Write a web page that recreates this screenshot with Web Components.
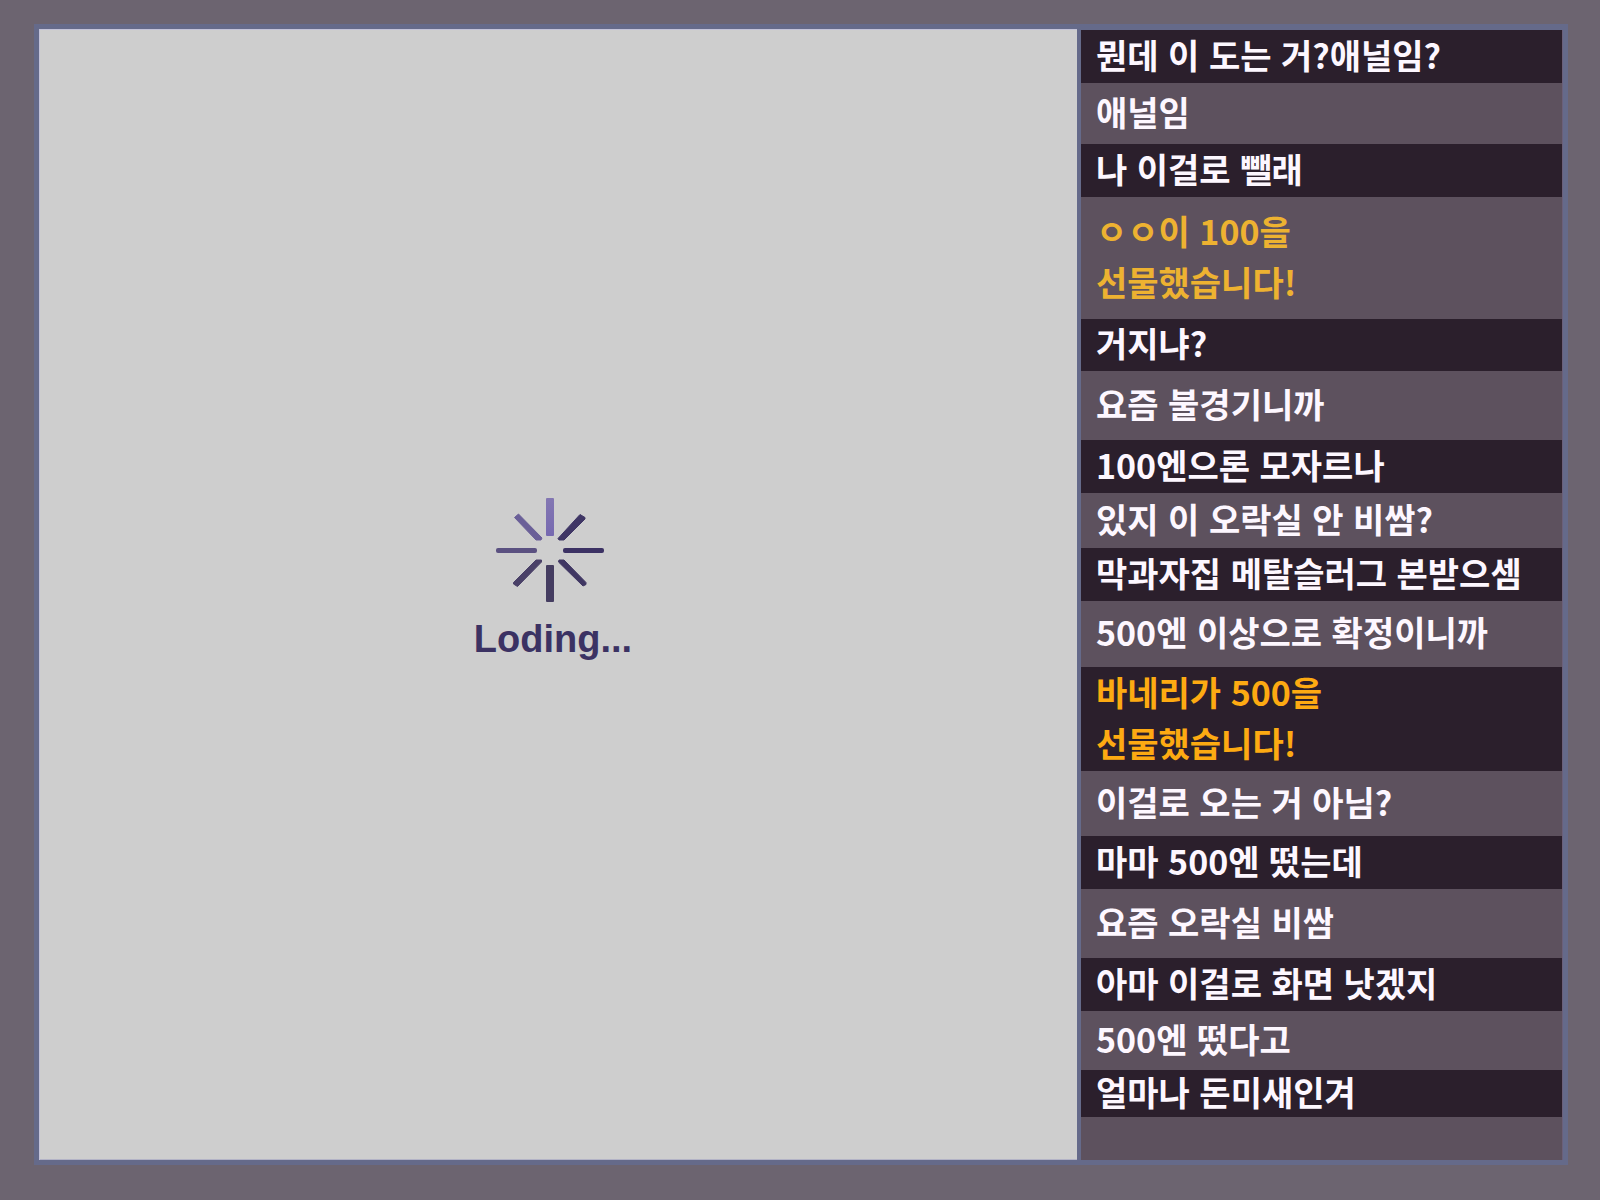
<!DOCTYPE html>
<html lang="ko">
<head>
<meta charset="utf-8">
<title>Loding...</title>
<style>
  html, body { height: 100%; margin: 0; }
  body {
    background: #6c6470;
    font-family: "Noto Sans CJK KR", "Noto Sans", sans-serif;
  }
</style>
</head>
<body>
<stream-app>
  <loading-screen slot="screen">Loding...</loading-screen>
  <chat-log slot="chat">
    <chat-message weight="53" tone="dark">뭔데 이 도는 거?애널임?</chat-message>
    <chat-message weight="61">애널임</chat-message>
    <chat-message weight="53" tone="dark">나 이걸로 뺄래</chat-message>
    <chat-message weight="122" gift>ㅇㅇ이 100을<br>선물했습니다!</chat-message>
    <chat-message weight="52" tone="dark">거지냐?</chat-message>
    <chat-message weight="69">요즘 불경기니까</chat-message>
    <chat-message weight="53" tone="dark">100엔으론 모자르나</chat-message>
    <chat-message weight="55">있지 이 오락실 안 비쌈?</chat-message>
    <chat-message weight="53" tone="dark">막과자집 메탈슬러그 본받으셈</chat-message>
    <chat-message weight="66">500엔 이상으로 확정이니까</chat-message>
    <chat-message weight="104" tone="dark" gift>바네리가 500을<br>선물했습니다!</chat-message>
    <chat-message weight="65">이걸로 오는 거 아님?</chat-message>
    <chat-message weight="53" tone="dark">마마 500엔 떴는데</chat-message>
    <chat-message weight="69">요즘 오락실 비쌈</chat-message>
    <chat-message weight="53" tone="dark">아마 이걸로 화면 낫겠지</chat-message>
    <chat-message weight="59">500엔 떴다고</chat-message>
    <chat-message weight="47" tone="dark">얼마나 돈미새인겨</chat-message>
    <chat-message weight="43"></chat-message>
  </chat-log>
</stream-app>

<script>
class StreamApp extends HTMLElement {
  constructor() {
    super();
    this.attachShadow({ mode: "open" }).innerHTML = `
      <style>
        :host {
          display: flex;
          box-sizing: border-box;
          min-height: 100vh;
          padding: 24px 32px 35px 34px;
        }
        main {
          flex: 1;
          display: grid;
          grid-template-columns: minmax(0, 1038fr) minmax(0, 486fr);
          border: 5px solid #656a8a;
        }
      </style>
      <main>
        <slot name="screen"></slot>
        <slot name="chat"></slot>
      </main>`;
  }
}

class LoadingScreen extends HTMLElement {
  constructor() {
    super();
    this.attachShadow({ mode: "open" }).innerHTML = `
      <style>
        :host {
          display: flex;
          flex-direction: column;
          align-items: center;
          justify-content: center;
          gap: 14px;
          box-sizing: border-box;
          padding: 0 10px 32px 0;
          background: #cecece;
          box-shadow: inset 1px 1px #c3c2d8, inset 0 -1px #b3b3c6;
          color: #3b3263;
          font: bold 38px/44px "Liberation Sans", Arial, sans-serif;
        }
        svg { display: block; width: 116px; height: 106px; }
      </style>
      <svg viewBox="0 0 116 106" fill="none" aria-hidden="true">
        <defs>
          <linearGradient id="up" x1="0" y1="0" x2="0" y2="1">
            <stop offset="0" stop-color="#8377b2"/><stop offset="1" stop-color="#7669b0"/>
          </linearGradient>
        </defs>
        <rect x="51" y="1" width="8" height="38" rx="1" fill="url(#up)"/>
        <path d="M85 17.500 90 20.500 90 22 69 43 64 43 63 41.500Z" fill="#3f3665" stroke="#3f3665" stroke-linejoin="round"/>
        <rect x="68" y="51" width="41" height="5" rx="2" fill="#3c3264"/>
        <path d="M64 63 69 63 91 85.500 91 87.500 88 89 63.500 65Z" fill="#403763" stroke="#403763" stroke-linejoin="round"/>
        <rect x="51" y="68" width="8" height="37" rx="1" fill="#453d61"/>
        <path d="M41 63 46.500 63 46.500 65 22.500 89.500 18.500 87 18.500 85.500Z" fill="#4a4168" stroke="#4a4168" stroke-linejoin="round"/>
        <rect x="1" y="51" width="41" height="5" rx="2" fill="#5b5181"/>
        <path d="M23.500 17 19.500 20.500 41 43 46 43 47 41Z" fill="#6a5f98" stroke="#6a5f98" stroke-linejoin="round"/>
      </svg>
      <div role="status"><slot></slot></div>`;
  }
}

class ChatLog extends HTMLElement {
  constructor() {
    super();
    this.attachShadow({ mode: "open" }).innerHTML = `
      <style>
        :host {
          display: flex;
          flex-direction: column;
          box-sizing: border-box;
          border: solid #656a8a;
          border-width: 1px 0 0 4px;
          padding-right: 1px;
          background: #6b607a;
        }
      </style>
      <slot></slot>`;
  }
}

class ChatMessage extends HTMLElement {
  constructor() {
    super();
    this.attachShadow({ mode: "open" }).innerHTML = `
      <style>
        :host {
          display: flex;
          align-items: center;
          flex: 1 0 0;
          padding: 0 15px;
          background: #5d515e;
          color: #fdf7ff;
          font-size: 34px;
          font-weight: 700;
          line-height: 51px;
          white-space: nowrap;
        }
        :host([gift]) { color: #edb231; }
        :host([tone="dark"]) { background: #2b1f2c; }
        :host([tone="dark"][gift]) { color: #fdaa12; }
        p { margin: -9px 0 -4px; }
      </style>
      <p><slot></slot></p>`;
  }
  connectedCallback() {
    this.style.flexGrow = this.getAttribute("weight");
  }
}

customElements.define("stream-app", StreamApp);
customElements.define("loading-screen", LoadingScreen);
customElements.define("chat-log", ChatLog);
customElements.define("chat-message", ChatMessage);
</script>
</body>
</html>
